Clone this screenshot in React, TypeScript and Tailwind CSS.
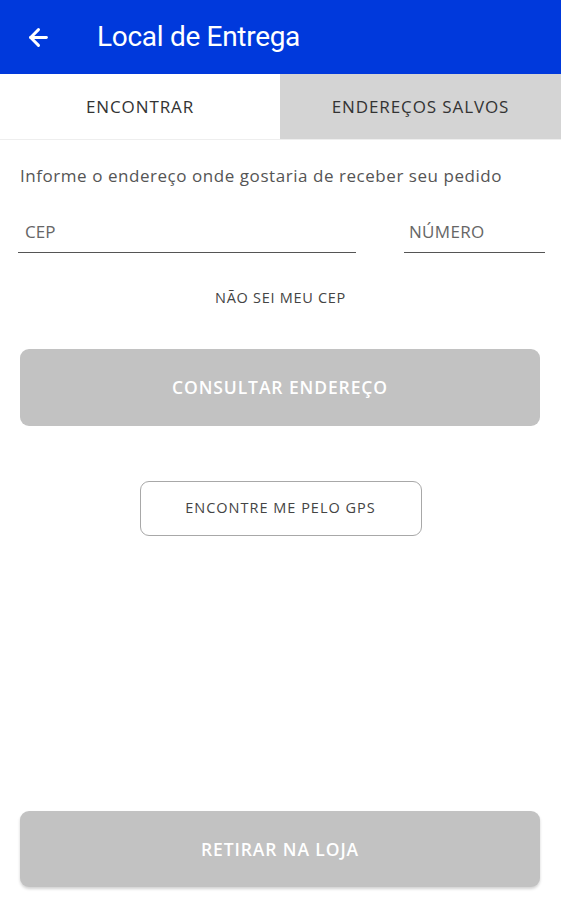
import { ArrowLeft } from 'lucide-react';

export default function App() {
  return (
    <div className="flex h-[900px] w-[561px] flex-col bg-white font-['Open_Sans',sans-serif] text-[#333]">
      <header className="flex h-[74px] items-center bg-[#0039dc] pl-[25px] text-white">
        <ArrowLeft className="size-[27px]" strokeWidth={2.6} />
        <h1 className="ml-[45px] font-['Roboto',sans-serif] text-[28px] tracking-[-0.3px]">Local de Entrega</h1>
      </header>

      <div className="flex h-[66px] border-b border-[#eeeeee]">
        <button className="flex w-[280px] items-center justify-center bg-white text-[17px] tracking-[0.9px] text-[#333]">
          ENCONTRAR
        </button>
        <button className="flex flex-1 items-center justify-center bg-[#d4d4d4] text-[17px] tracking-[0.9px] text-[#333]">
          ENDEREÇOS SALVOS
        </button>
      </div>

      <div className="flex flex-1 flex-col px-[20px] pb-[13px]">
        <p className="mt-[23px] text-[17px] tracking-[0.55px] text-[#555]">
          Informe o endereço onde gostaria de receber seu pedido
        </p>

        <div className="-ml-[2px] -mr-[4px] mt-[30px] flex items-end justify-between">
          <div className="w-[338px] border-b-[1.5px] border-[#555] pb-[8px] pl-[7px] text-[17px] text-[#666]">
            CEP
          </div>
          <div className="w-[141px] border-b-[1.5px] border-[#555] pb-[8px] pl-[5px] text-[17px] tracking-[0.3px] text-[#666]">
            NÚMERO
          </div>
        </div>

        <button className="mt-[34px] self-center text-[14.5px] tracking-[0.7px] text-[#444]">NÃO SEI MEU CEP</button>

        <button className="mt-[40px] flex h-[77px] w-[520px] items-center justify-center rounded-[9px] bg-[#c2c2c2] text-[17.5px] font-semibold tracking-[0.9px] text-white">
          CONSULTAR ENDEREÇO
        </button>

        <button className="mt-[55px] flex h-[55px] w-[282px] items-center justify-center self-center rounded-[9px] border border-[#a8a8a8] text-[14.5px] tracking-[1px] text-[#444]">
          ENCONTRE ME PELO GPS
        </button>

        <button className="mt-auto flex h-[76px] w-[520px] items-center justify-center rounded-[9px] bg-[#c2c2c2] text-[17.5px] font-semibold tracking-[0.9px] text-white shadow-[0_2px_3px_rgba(0,0,0,0.18)]">
          RETIRAR NA LOJA
        </button>
      </div>
    </div>
  );
}
